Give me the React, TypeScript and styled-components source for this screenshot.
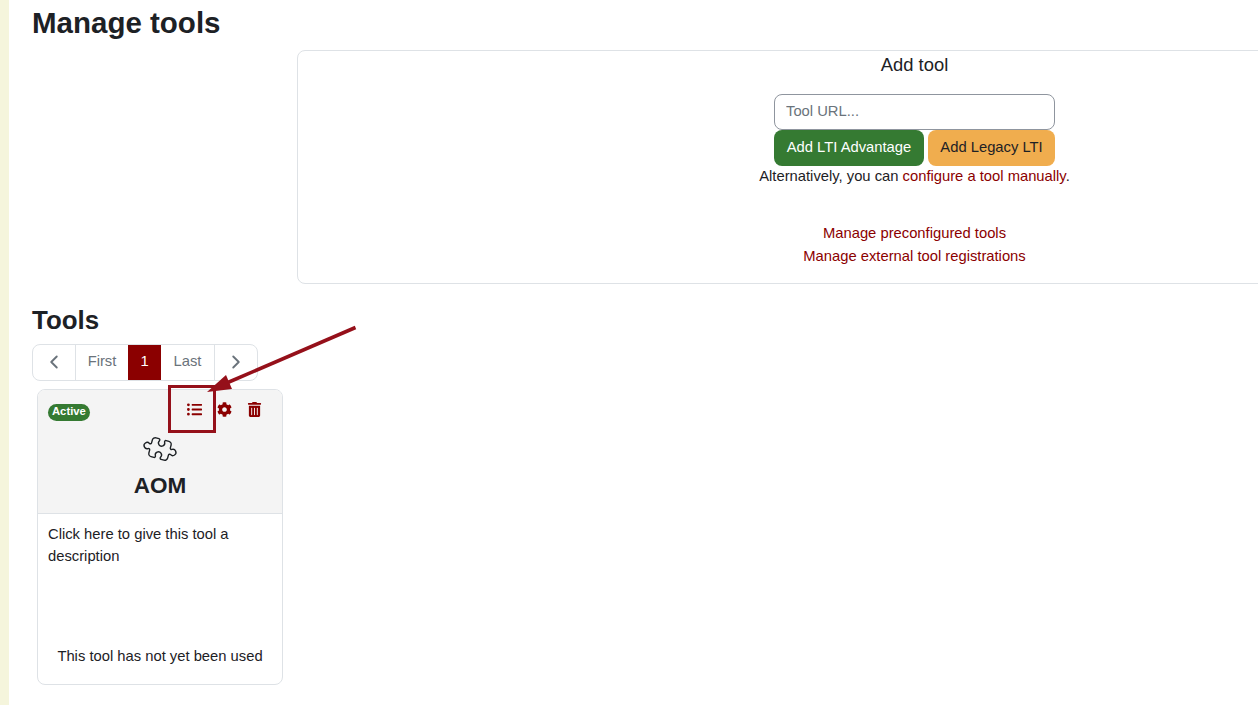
import React from 'react';
import styled, { createGlobalStyle } from 'styled-components';
import { FaListUl, FaCog, FaTrashAlt } from 'react-icons/fa';
import { LuChevronLeft, LuChevronRight, LuPuzzle } from 'react-icons/lu';

const GlobalStyle = createGlobalStyle`
  html, body {
    margin: 0;
    height: 705px;
    overflow: hidden;
    background: #fff;
    font-family: "Liberation Sans", Arial, sans-serif;
    font-size: 14.77px;
    line-height: 22.5px;
    color: #1d2125;
  }
`;

const Page = styled.div`
  display: flex;
  height: 705px;
  position: relative;
  overflow: hidden;
`;

const Stripe = styled.div`
  flex: 0 0 9px;
  background: #f5f5dc;
`;

const Main = styled.main`
  flex: 1;
  min-width: 0;
  padding-left: 23px;
`;

const Title = styled.h2`
  margin: 0;
  height: 50px;
  padding-top: 5px;
  box-sizing: border-box;
  font-size: 29.5px;
  line-height: 36px;
  font-weight: 700;
`;

const AddPanel = styled.section`
  box-sizing: border-box;
  margin-left: 265px;
  width: 1235px;
  height: 234px;
  border: 1px solid #dee2e6;
  border-radius: 8px;
  display: flex;
  flex-direction: column;
  align-items: center;
`;

const AddTitle = styled.div`
  font-size: 18.4px;
  line-height: 27px;
  margin-bottom: 16px;
`;

const UrlInput = styled.input`
  box-sizing: border-box;
  width: 281px;
  height: 36px;
  padding: 0 11px 3px;
  border: 1px solid #8f959e;
  border-radius: 8px;
  font: inherit;
  color: #1d2125;
  outline: none;

  &::placeholder {
    color: #6a737b;
    opacity: 1;
  }
`;

const ButtonRow = styled.div`
  display: flex;
  gap: 4px;
  width: 281px;
`;

const Button = styled.button<{ $variant: 'success' | 'warning' }>`
  flex: 0 0 ${(p) => (p.$variant === 'success' ? '150px' : '127px')};
  height: 36px;
  padding: 0 0 2px;
  border: 0;
  border-radius: 8px;
  font: inherit;
  white-space: nowrap;
  background: ${(p) => (p.$variant === 'success' ? '#357a32' : '#f0ad4e')};
  color: ${(p) => (p.$variant === 'success' ? '#fff' : '#1d2125')};
`;

const Note = styled.div`
  margin-top: -1px;
`;

const Link = styled.a`
  color: #8b0000;
  text-decoration: none;
`;

const ManageLinks = styled.div`
  margin-top: 34px;
  display: flex;
  flex-direction: column;
  align-items: center;
  line-height: 23px;
`;

const ToolsTitle = styled.h3`
  margin: 20px 0 0;
  height: 40px;
  font-size: 25.9px;
  line-height: 32px;
  font-weight: 700;
`;

const Pagination = styled.nav`
  display: inline-flex;
  height: 37px;
  box-sizing: border-box;
  border: 1px solid #dee2e6;
  border-radius: 8px;
  overflow: hidden;
`;

const PageItem = styled.a<{ $active?: boolean; $divider?: boolean; $width: number }>`
  display: flex;
  align-items: center;
  justify-content: center;
  box-sizing: border-box;
  padding-bottom: 2px;
  width: ${(p) => p.$width}px;
  color: ${(p) => (p.$active ? '#fff' : '#6a737b')};
  background: ${(p) => (p.$active ? '#8b0000' : 'transparent')};
  border-left: ${(p) => (p.$divider ? '1px solid #dee2e6' : '0')};
`;

const Card = styled.article`
  box-sizing: border-box;
  margin: 8px 0 0 5px;
  width: 246px;
  height: 296px;
  border: 1px solid #dee2e6;
  border-radius: 8px;
  overflow: hidden;
  display: flex;
  flex-direction: column;
`;

const CardHeader = styled.header`
  flex: 0 0 124px;
  box-sizing: border-box;
  background: #f4f4f4;
  border-bottom: 1px solid #dee2e6;
  padding: 9px 10px 0;
  display: flex;
  flex-direction: column;
  align-items: center;
`;

const HeaderTop = styled.div`
  align-self: stretch;
  display: flex;
  align-items: flex-start;
  justify-content: space-between;
`;

const Badge = styled.span`
  margin-top: 5px;
  height: 17px;
  padding: 0 4px;
  border-radius: 9px;
  background: #357a32;
  color: #fff;
  font-size: 11.25px;
  line-height: 15px;
  font-weight: 700;
`;

const Actions = styled.div`
  display: flex;
  align-items: center;
  gap: 15px;
  padding: 3px 0 0;
  color: #8b0000;
  margin-right: 10px;
  font-size: 15px;
  svg {
    display: block;
  }
`;

const ToolIcon = styled(LuPuzzle)`
  display: block;
  margin: 13px 0 0 -1px;
  flex: none;
  color: #1d2125;
  transform: rotate(60deg);
`;

const ToolName = styled.div`
  font-size: 22.5px;
  line-height: 27px;
  font-weight: 700;
  margin-top: 8px;
`;

const CardBody = styled.div`
  flex: 1;
  padding: 9px 10px 0;
  display: flex;
  flex-direction: column;
  justify-content: space-between;
  line-height: 22px;
`;

const Usage = styled.div`
  text-align: center;
  margin-bottom: 17px;
`;

const Annotation = styled.svg`
  position: absolute;
  top: 0;
  left: 0;
  pointer-events: none;
`;

export default function App() {
  return (
    <>
      <GlobalStyle />
      <Page>
        <Stripe />
        <Main>
          <Title>Manage tools</Title>
          <AddPanel>
            <AddTitle>Add tool</AddTitle>
            <UrlInput placeholder="Tool URL..." />
            <ButtonRow>
              <Button $variant="success">Add LTI Advantage</Button>
              <Button $variant="warning">Add Legacy LTI</Button>
            </ButtonRow>
            <Note>
              Alternatively, you can <Link href="#">configure a tool manually</Link>.
            </Note>
            <ManageLinks>
              <Link href="#">Manage preconfigured tools</Link>
              <Link href="#">Manage external tool registrations</Link>
            </ManageLinks>
          </AddPanel>
          <ToolsTitle>Tools</ToolsTitle>
          <Pagination>
            <PageItem $width={42}><LuChevronLeft size={22} strokeWidth={2.1} /></PageItem>
            <PageItem $width={53} $divider>First</PageItem>
            <PageItem $width={33} $active>1</PageItem>
            <PageItem $width={53}>Last</PageItem>
            <PageItem $width={43} $divider><LuChevronRight size={22} strokeWidth={2.1} /></PageItem>
          </Pagination>
          <Card>
            <CardHeader>
              <HeaderTop>
                <Badge>Active</Badge>
                <Actions>
                  <FaListUl />
                  <FaCog />
                  <FaTrashAlt />
                </Actions>
              </HeaderTop>
              <ToolIcon size={30} strokeWidth={1.1} />
              <ToolName>AOM</ToolName>
            </CardHeader>
            <CardBody>
              <div>Click here to give this tool a description</div>
              <Usage>This tool has not yet been used</Usage>
            </CardBody>
          </Card>
        </Main>
        <Annotation width="1258" height="705">
          <rect x="169.5" y="386.5" width="45" height="45" fill="none" stroke="#95101a" strokeWidth="3" />
          <line x1="355.5" y1="327.5" x2="222" y2="385" stroke="#95101a" strokeWidth="3.6" />
          <polygon points="207,392 226,375 232,389" fill="#95101a" />
        </Annotation>
      </Page>
    </>
  );
}
